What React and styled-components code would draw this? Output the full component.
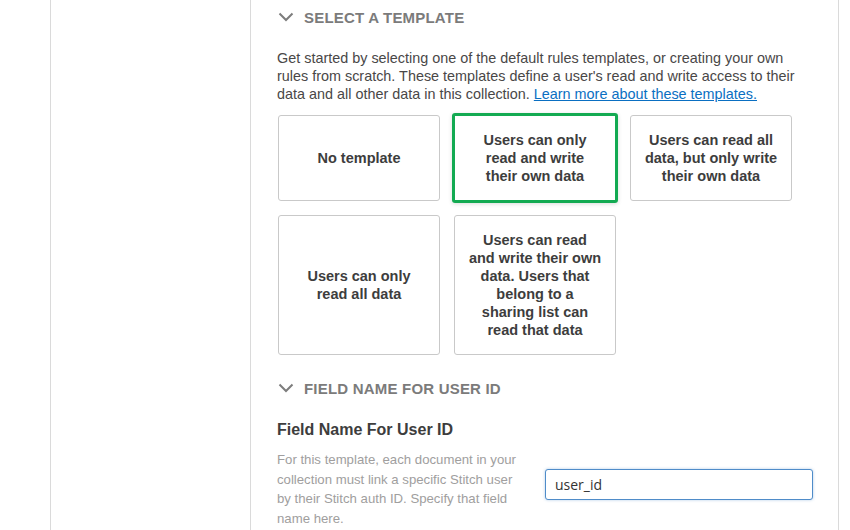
import React from 'react';
import styled, { createGlobalStyle } from 'styled-components';

const GlobalStyle = createGlobalStyle`
  html, body {
    margin: 0;
    padding: 0;
    background: #fff;
    font-family: "Liberation Sans", Arial, sans-serif;
  }
`;

// line breaks follow the original card layout
const templates = [
  { id: 'none', label: 'No template' },
  { id: 'own', label: 'Users can only\nread and write\ntheir own data', selected: true },
  { id: 'readall', label: 'Users can read all\ndata, but only write\ntheir own data' },
  { id: 'readonly', label: 'Users can only\nread all data' },
  {
    id: 'sharing',
    label: 'Users can read\nand write their own\ndata. Users that\nbelong to a\nsharing list can\nread that data',
  },
];

const Chevron = () => (
  <svg width="16" height="10" viewBox="0 0 16 10">
    <path d="M1.5 1.5 L8 8 L14.5 1.5" fill="none" stroke="#7d7d7d" strokeWidth="2" />
  </svg>
);

const App = () => {
  return (
    <>
      <GlobalStyle />
      <Page>
        <Rail />
        <SideNav />
        <Main>
          <SectionHeader>
            <Chevron />
            <SectionTitle>Select a template</SectionTitle>
          </SectionHeader>
          <Intro>
            Get started by selecting one of the default rules templates, or creating your own
            rules from scratch. These templates define a user's read and write access to their
            data and all other data in this collection.{' '}
            <a href="#">Learn more about these templates.</a>
          </Intro>
          <CardGrid>
            {templates.map((t) => (
              <Card key={t.id} selected={t.selected}>
                {t.label}
              </Card>
            ))}
          </CardGrid>
          <SectionHeader spaced>
            <Chevron />
            <SectionTitle>Field name for user ID</SectionTitle>
          </SectionHeader>
          <FieldLabel>Field Name For User ID</FieldLabel>
          <FieldRow>
            <FieldHelp>
              For this template, each document in your collection must link a specific Stitch user
              by their Stitch auth ID. Specify that field name here.
            </FieldHelp>
            <TextInput defaultValue="user_id" />
          </FieldRow>
        </Main>
      </Page>
    </>
  );
};

const Page = styled.div`
  display: flex;
  height: 530px;
  overflow: hidden;
`;

const Rail = styled.div`
  width: 50px;
  flex-shrink: 0;
`;

const SideNav = styled.div`
  width: 199px;
  flex-shrink: 0;
  border-left: 1px solid #dadada;
`;

const Main = styled.div`
  width: 536px;
  flex-shrink: 0;
  padding: 0 25px 0 26px;
  border-left: 1px solid #dadada;
  border-right: 1px solid #dadada;
`;

const SectionHeader = styled.div`
  display: flex;
  align-items: center;
  gap: 10px;
  height: 34px;
  padding-left: 1px;
  margin-top: ${(p) => (p.spaced ? '16px' : '0')};
`;

const SectionTitle = styled.h3`
  margin: 0;
  font-size: 15px;
  font-weight: bold;
  letter-spacing: 0.2px;
  text-transform: uppercase;
  color: #7b7b7b;
`;

const Intro = styled.p`
  margin: 15px 0 0;
  font-size: 14.4px;
  line-height: 18px;
  color: #494747;

  a {
    color: #0a6fc2;
    text-decoration: underline;
  }
`;

const CardGrid = styled.div`
  display: grid;
  grid-template-columns: repeat(3, 162px);
  gap: 14px;
  margin-top: 12px;
  padding-left: 1px;
`;

const Card = styled.div`
  display: flex;
  align-items: center;
  justify-content: center;
  text-align: center;
  white-space: pre-line;
  box-sizing: border-box;
  min-height: 86px;
  padding: 15px 6px;
  border: ${(p) => (p.selected ? '3px solid #13aa52' : '1px solid #c9c9c9')};
  margin: ${(p) => (p.selected ? '-2px' : '0')};
  border-radius: 3px;
  box-shadow: ${(p) => (p.selected ? '0 1px 4px rgba(0,0,0,0.15)' : 'none')};
  font-size: 14.5px;
  font-weight: bold;
  line-height: 18px;
  color: #3d3d3d;
  cursor: pointer;
`;

const FieldLabel = styled.div`
  margin-top: 15px;
  font-size: 16px;
  font-weight: bold;
  line-height: 20px;
  color: #3d3d3d;
`;

const FieldRow = styled.div`
  display: flex;
  align-items: flex-start;
  gap: 24px;
  margin-top: 10px;
`;

const FieldHelp = styled.div`
  width: 244px;
  flex-shrink: 0;
  font-size: 13.2px;
  line-height: 19.7px;
  color: #a09e9e;
`;

const TextInput = styled.input`
  box-sizing: border-box;
  width: 269px;
  height: 31px;
  margin-top: 19px;
  padding: 0 9px;
  border: 1px solid #4f8cc9;
  border-radius: 3px;
  box-shadow: 0 0 3px rgba(79, 140, 201, 0.45);
  font-family: "Open Sans", sans-serif;
  font-size: 14px;
  color: #333;
  outline: none;
`;

export default App;
